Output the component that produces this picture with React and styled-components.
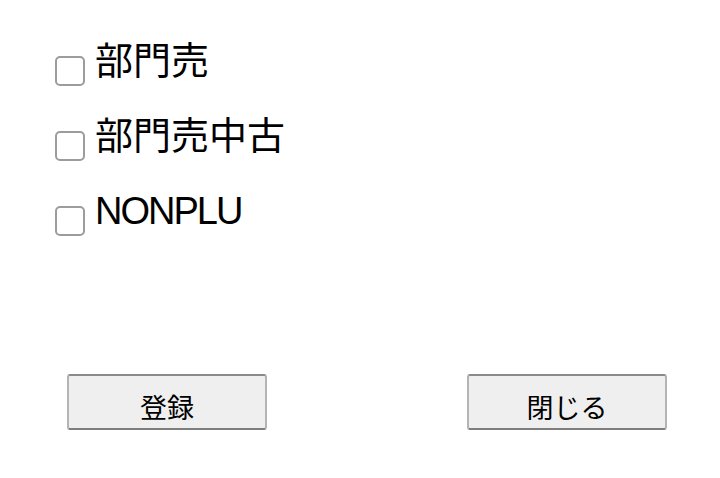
import React from "react";
import styled, { createGlobalStyle } from "styled-components";

const Global = createGlobalStyle`
  html, body { margin: 0; padding: 0; background: #ffffff; }
  body { width: 720px; height: 478px; overflow: hidden; }
`;

const Page = styled.div`
  width: 720px;
  height: 478px;
  box-sizing: border-box;
  padding-top: 42px;
  display: flex;
  flex-direction: column;
  background: #ffffff;
`;

const List = styled.div`
  display: flex;
  flex-direction: column;
  padding-left: 55px;
`;

const Row = styled.label`
  display: flex;
  align-items: flex-start;
  gap: 10px;
  height: 75px;
`;

const Box = styled.span`
  box-sizing: border-box;
  width: 30px;
  height: 30px;
  margin-top: 14px;
  border: 2px solid #9c9c9c;
  border-radius: 5px;
  background: #ffffff;
  flex: none;
`;

const Label = styled.span`
  font-family: "Liberation Sans", "Noto Sans CJK JP", sans-serif;
  font-size: 38px;
  line-height: 38px;
  color: #000000;
  letter-spacing: ${(p) => (p.$tight ? "-2px" : "0")};
  white-space: nowrap;
`;

const Buttons = styled.div`
  display: flex;
  justify-content: space-between;
  padding: 0 53px 0 67px;
  margin-top: 107px;
`;

const Button = styled.button`
  box-sizing: border-box;
  width: 200px;
  height: 56px;
  margin: 0;
  padding: 8px 0 0 0;
  display: flex;
  align-items: center;
  justify-content: center;
  background: #efefef;
  border: 2px solid;
  border-color: #8a8a8a #b4b4b4 #7e7e7e #b4b4b4;
  border-radius: 3px;
  font-family: "Noto Sans CJK JP", sans-serif;
  font-size: 27px;
  line-height: 27px;
  color: #000000;
`;

const items = [
  { text: "部門売" },
  { text: "部門売中古" },
  { text: "NONPLU", tight: true },
];

export default function App() {
  return (
    <>
      <Global />
      <Page>
        <List>
          {items.map((it) => (
            <Row key={it.text}>
              <Box />
              <Label $tight={it.tight}>{it.text}</Label>
            </Row>
          ))}
        </List>
        <Buttons>
          <Button>登録</Button>
          <Button>閉じる</Button>
        </Buttons>
      </Page>
    </>
  );
}
